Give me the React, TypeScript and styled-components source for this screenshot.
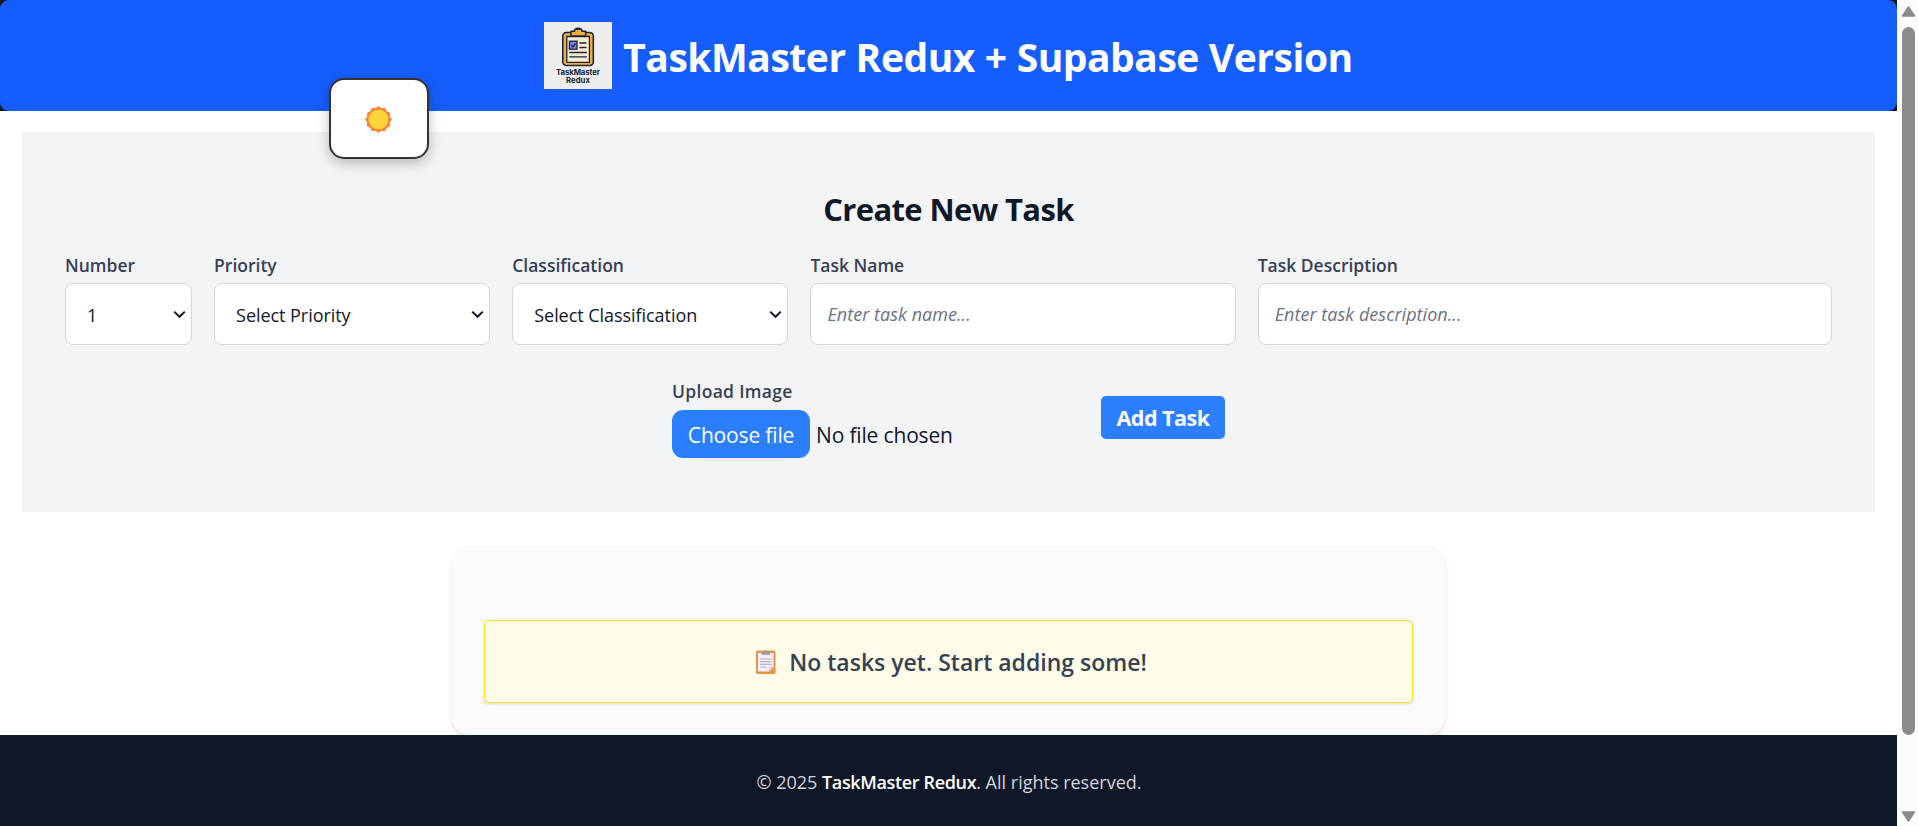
import React from "react";
import styled, { createGlobalStyle } from "styled-components";

const GlobalStyle = createGlobalStyle`
  *, *::before, *::after { box-sizing: border-box; }
  html, body { margin: 0; height: 826px; overflow: hidden; background: #ffffff; }
  body, input, select, button { font-family: "Open Sans", "Noto Sans", sans-serif; }
  h1, h2, p { margin: 0; }
`;

const Window = styled.div`
  display: flex;
  height: 826px;
`;

const Page = styled.div`
  position: relative;
  flex: 1;
  display: flex;
  flex-direction: column;
`;

const HeaderBackdrop = styled.div`
  background: #101828;
`;

const Header = styled.header`
  height: 111px;
  display: flex;
  align-items: center;
  justify-content: center;
  gap: 11px;
  border-radius: 9px;
  background: #155dfc;
`;

const Title = styled.h1`
  color: #ffffff;
  font-size: 39px;
  line-height: 44px;
  font-weight: 700;
  letter-spacing: -0.47px;
  word-spacing: 0.3px;
  white-space: nowrap;
  padding-top: 2px;
`;

const ThemeToggle = styled.button`
  position: absolute;
  left: 328.5px;
  top: 78px;
  width: 100px;
  height: 81px;
  padding: 2px 0 0;
  display: flex;
  align-items: center;
  justify-content: center;
  background: #ffffff;
  border: 2px solid #333333;
  border-radius: 15px;
  box-shadow: 0 4px 13px rgba(0, 0, 0, 0.25);
`;

const FormCard = styled.section`
  height: 380px;
  margin: 21px 22px 0;
  padding: 55px 43px 0;
  background: #f3f4f6;
`;

const FormTitle = styled.h2`
  color: #101828;
  font-size: 31px;
  line-height: 44px;
  font-weight: 700;
  letter-spacing: -0.63px;
  text-align: center;
`;

const Fields = styled.div`
  display: grid;
  grid-template-columns: repeat(12, 1fr);
  column-gap: 22px;
  margin-top: 21px;
`;

const Field = styled.div<{ $span: number }>`
  grid-column: span ${(p) => p.$span};
  display: flex;
  flex-direction: column;
`;

const Label = styled.label<{ $spacing?: number }>`
  color: #364153;
  font-size: 17.5px;
  line-height: 26px;
  height: 31px;
  font-weight: 600;
  letter-spacing: ${(p) => p.$spacing ?? 0}px;
  white-space: nowrap;
`;

const SelectBox = styled.div`
  position: relative;
  display: flex;
`;

const Select = styled.select`
  appearance: none;
  width: 100%;
  height: 62px;
  padding: 1px 21px 0;
  border: 1px solid #d1d5dc;
  border-radius: 8px;
  background: #ffffff;
  color: #101828;
  font-size: 18px;
  letter-spacing: -0.05px;
`;

const Chevron = styled.svg`
  position: absolute;
  right: 6px;
  top: 27px;
  width: 13px;
  height: 9px;
`;

const Input = styled.input`
  width: 100%;
  height: 62px;
  padding: 0 16px 1px;
  border: 1px solid #d1d5dc;
  border-radius: 8px;
  background: #ffffff;
  font-size: 18px;
  letter-spacing: 0.05px;
  &::placeholder { color: #6a7282; font-style: italic; opacity: 1; }
`;

const Actions = styled.div`
  display: flex;
  align-items: flex-start;
  padding-left: 607px;
  margin-top: 33px;
`;

const Upload = styled.div`
  width: 429px;
  display: flex;
  flex-direction: column;
`;

const FileRow = styled.div`
  display: flex;
  align-items: center;
  gap: 6px;
  margin-top: 1px;
  color: #101828;
  font-size: 21px;
  letter-spacing: -0.16px;
  white-space: nowrap;
`;

const FileName = styled.span`
  padding-top: 2px;
`;

const ChooseButton = styled.button`
  width: 138px;
  height: 48px;
  padding: 1px 0 0;
  border: 0;
  border-radius: 11px;
  background: #2b7fff;
  color: #ffffff;
  font-size: 21px;
  letter-spacing: -0.16px;
`;

const AddButton = styled.button`
  width: 124px;
  height: 43px;
  margin-top: 18px;
  padding: 0;
  border: 0;
  border-radius: 5px;
  background: #2b7fff;
  color: #ffffff;
  font-size: 21.5px;
  font-weight: 700;
  letter-spacing: -0.52px;
  white-space: nowrap;
`;

const TaskList = styled.section`
  width: 993px;
  height: 190px;
  margin: 33px auto 0;
  padding: 75px 32px 0;
  border-radius: 18px;
  background: #f9fafb;
  box-shadow: 0 4px 7px -1px rgba(0, 0, 0, 0.1), 0 2px 4px -2px rgba(0, 0, 0, 0.1);
`;

const EmptyNotice = styled.div`
  height: 83px;
  display: flex;
  align-items: center;
  justify-content: center;
  gap: 13px;
  padding-left: 6px;
  border: 1px solid #ffdf20;
  border-radius: 5px;
  background: #fefce8;
  box-shadow: 0 1px 3px rgba(0, 0, 0, 0.15);
`;

const EmptyText = styled.p`
  color: #364153;
  font-size: 23px;
  line-height: 34px;
  font-weight: 600;
  letter-spacing: 0;
  white-space: nowrap;
`;

const Footer = styled.footer`
  position: relative;
  height: 91px;
  display: flex;
  align-items: center;
  justify-content: center;
  background: #101828;
  color: #d1d5dc;
  font-size: 18px;
  letter-spacing: 0;
  padding: 3px 0 0 1px;
`;

const Brand = styled.strong`
  color: #ffffff;
  font-weight: 600;
  letter-spacing: -0.35px;
`;

const ScrollTrack = styled.div`
  width: 21px;
  display: flex;
  flex-direction: column;
  align-items: center;
  background: #fcfcfc;
  padding: 6px 0 4px 2px;
`;

const ScrollThumb = styled.div`
  width: 13px;
  height: 708px;
  margin: 10px 0 auto;
  border-radius: 7px;
  background: #8b8b8b;
`;

const Logo = () => (
  <svg width="68" height="67" viewBox="0 0 68 67">
    <rect width="68" height="67" fill="#eeeeee" />
    <rect x="18.8" y="10.5" width="30.5" height="33" rx="3.5" fill="#f5ae3a" stroke="#14263b" strokeWidth="1.6" />
    <path d="M22.8 14.5h22.6v25.8H22.8z" fill="#fdebd0" stroke="#14263b" strokeWidth="1.3" />
    <path d="M27 14V9.2h3.4c.3-4 7.4-4 7.7 0h3.5V14z" fill="#f5ae3a" stroke="#14263b" strokeWidth="1.5" />
    <path d="M32 7.4h4.5" stroke="#14263b" strokeWidth="1.2" />
    <rect x="25.4" y="19.2" width="7.6" height="8" fill="#8078dc" stroke="#14263b" strokeWidth="1.3" />
    <path d="M27.3 23.2l1.6 1.7 2.6-3.3" fill="none" stroke="#14263b" strokeWidth="1.2" />
    <path d="M35.5 21h7M35.5 25.5h7M25.3 30.5h17.5M25.3 34.8h17.5" stroke="#14263b" strokeWidth="1.3" />
    <text x="34" y="53" textAnchor="middle" textLength="44" fontFamily="Inter, sans-serif" fontSize="7.8" fontWeight="700" fill="#14263b">TaskMaster</text>
    <text x="34" y="61" textAnchor="middle" textLength="24" fontFamily="Inter, sans-serif" fontSize="7.8" fontWeight="700" fill="#14263b">Redux</text>
  </svg>
);

const sunPoints = Array.from({ length: 24 }, (_, i) => {
  const r = i % 2 === 0 ? 12.8 : 11.2;
  const a = (i * Math.PI) / 12 - Math.PI / 2;
  return `${(13.5 + r * Math.cos(a)).toFixed(2)},${(13.5 + r * Math.sin(a)).toFixed(2)}`;
}).join(" ");

const Sun = () => (
  <svg width="27" height="27" viewBox="0 0 27 27">
    <polygon points={sunPoints} fill="#ff822d" stroke="#ff822d" strokeWidth="1" strokeLinejoin="round" />
    <circle cx="13.5" cy="13.5" r="10" fill="#ffd43b" />
  </svg>
);

const Clipboard = () => (
  <svg width="20" height="25" viewBox="0 0 20 25">
    <rect x="0" y="1.5" width="19.5" height="23.5" rx="1.5" fill="#e19747" />
    <path d="M2 4h15.5v14L13 22.5H2z" fill="#f3eef8" />
    <path d="M17.5 17.5L12.8 22.5V19.5a2 2 0 0 1 2-2z" fill="#d8cfe3" />
    <path d="M5.5 5.8V2.6h2.6a1.8 1.8 0 0 1 3.4 0H14v3.2z" fill="#9b9b9b" />
    <path d="M4 10h11.5M4 12.7h11.5M4 15.3h11.5M4 18h7" stroke="#bdb5c6" strokeWidth="1.2" />
  </svg>
);

const Arrow = ({ down }: { down?: boolean }) => (
  <svg width="15" height="11" viewBox="0 0 15 11">
    <path d={down ? "M1.5 1h12L7.5 10z" : "M1.5 10h12L7.5 1z"} fill="#8b8b8b" stroke="#8b8b8b" strokeWidth="1.6" strokeLinejoin="round" />
  </svg>
);

const SelectField = ({ label, value, span }: { label: string; value: string; span: number }) => (
  <Field $span={span}>
    <Label>{label}</Label>
    <SelectBox>
      <Select defaultValue={value}>
        <option>{value}</option>
      </Select>
      <Chevron viewBox="0 0 13 9">
        <path d="M1.2 1.6l5.3 5.2 5.3-5.2" fill="none" stroke="#101828" strokeWidth="2" />
      </Chevron>
    </SelectBox>
  </Field>
);

const TextField = ({ label, placeholder, span }: { label: string; placeholder: string; span: number }) => (
  <Field $span={span}>
    <Label>{label}</Label>
    <Input placeholder={placeholder} />
  </Field>
);

export default function App() {
  return (
    <>
      <GlobalStyle />
      <Window>
        <Page>
          <HeaderBackdrop>
            <Header>
              <Logo />
              <Title>TaskMaster Redux + Supabase Version</Title>
            </Header>
          </HeaderBackdrop>
          <ThemeToggle aria-label="Toggle theme">
            <Sun />
          </ThemeToggle>
          <FormCard>
            <FormTitle>Create New Task</FormTitle>
            <Fields>
              <SelectField label="Number" value="1" span={1} />
              <SelectField label="Priority" value="Select Priority" span={2} />
              <SelectField label="Classification" value="Select Classification" span={2} />
              <TextField label="Task Name" placeholder="Enter task name..." span={3} />
              <TextField label="Task Description" placeholder="Enter task description..." span={4} />
            </Fields>
            <Actions>
              <Upload>
                <Label $spacing={0.3}>Upload Image</Label>
                <FileRow>
                  <ChooseButton>Choose file</ChooseButton>
                  <FileName>No file chosen</FileName>
                </FileRow>
              </Upload>
              <AddButton>Add Task</AddButton>
            </Actions>
          </FormCard>
          <TaskList>
            <EmptyNotice>
              <Clipboard />
              <EmptyText>No tasks yet. Start adding some!</EmptyText>
            </EmptyNotice>
          </TaskList>
          <Footer>
            <p>
              © 2025 <Brand>TaskMaster Redux</Brand>. All rights reserved.
            </p>
          </Footer>
        </Page>
        <ScrollTrack>
          <Arrow />
          <ScrollThumb />
          <Arrow down />
        </ScrollTrack>
      </Window>
    </>
  );
}
